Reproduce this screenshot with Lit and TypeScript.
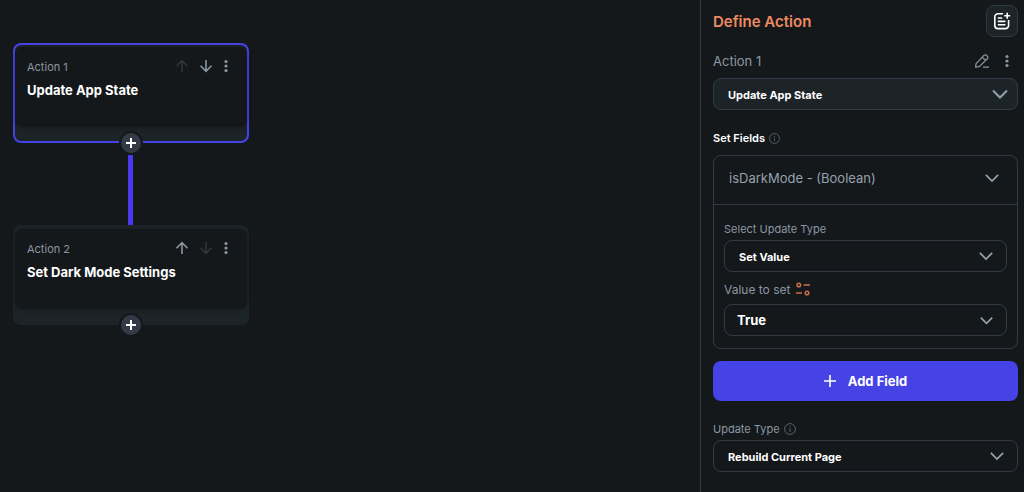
import { LitElement, html, css, svg, nothing } from "lit";
import { customElement, property } from "lit/decorators.js";

const dots = svg`<svg class="icon" width="16" height="16" viewBox="0 0 16 16" fill="currentColor" aria-hidden="true">
  <circle cx="8" cy="3.5" r="1.6"/><circle cx="8" cy="8" r="1.6"/><circle cx="8" cy="12.5" r="1.6"/></svg>`;

const arrow = (up: boolean) => svg`<svg class="icon" width="16" height="16" viewBox="0 0 16 16" fill="none" stroke="currentColor" stroke-width="1.6" aria-hidden="true">
  <path d=${up ? "M8 14V3M2.5 8.2L8 2.7l5.5 5.5" : "M8 2v11M2.5 7.8L8 13.3l5.5-5.5"}/></svg>`;

const info = (size: number) => svg`<svg class="icon info" width=${size} height=${size} viewBox="0 0 12 12" fill="none" stroke="currentColor" aria-hidden="true">
  <circle cx="6" cy="6" r="5.4"/><path d="M6 5.2v3.6M6 3v1.2"/></svg>`;

const chevron = (size: number) => svg`<svg class="icon chevron" width=${size} height=${size} viewBox="0 0 16 16" fill="none" stroke="currentColor" stroke-width="2" aria-hidden="true">
  <path d="M1 4.5l7 7 7-7"/></svg>`;

const reset = css`
  * { box-sizing: border-box; }
  button, select { font: inherit; color: inherit; }
  button { display: grid; place-items: center; padding: 0; border: 0; background: none; cursor: pointer; }
  .icon { display: block; flex: none; }
`;

@customElement("action-node")
export class ActionNode extends LitElement {
  @property() label = "";
  @property() name = "";
  @property({ type: Boolean, reflect: true }) selected = false;
  @property({ type: Boolean }) first = false;
  @property({ type: Boolean }) last = false;

  static styles = [reset, css`
    :host { display: block; position: relative; width: 236px; }
    .frame {
      padding: 2px 0 14px;
      border: 2px solid #1d2428;
      border-radius: 8px;
      background: #1d2428;
    }
    :host([selected]) .frame { border-color: #4542e6; }
    .card {
      height: 80px;
      padding: 10px 12px;
      border-radius: 8px;
      background: #14181b;
      box-shadow: 0 1px 4px rgba(0, 0, 0, 0.3);
    }
    .top { display: flex; align-items: center; height: 18px; color: #8b97a2; }
    .label { flex: 1; padding-top: 2px; font-size: 11px; line-height: 18px; }
    .tools { display: flex; gap: 8px; margin-right: 1px; }
    .tools .more { margin-left: -4px; }
    .tools button:disabled { color: #30363b; cursor: default; }
    .name { margin: 5px 0 0; font-size: 13px; line-height: 20px; font-weight: 700; color: #fff; }
    .add {
      position: absolute;
      left: calc(50% - 12px);
      bottom: -12px;
      width: 24px;
      height: 24px;
      border: 2px solid #14181b;
      border-radius: 50%;
      background: #323b45;
      color: #fff;
    }
  `];

  render() {
    return html`
      <div class="frame">
        <div class="card">
          <div class="top">
            <span class="label">${this.label}</span>
            <div class="tools">
              <button aria-label="Move up" ?disabled=${this.first}>${arrow(true)}</button>
              <button aria-label="Move down" ?disabled=${this.last}>${arrow(false)}</button>
              <button class="more" aria-label="More">${dots}</button>
            </div>
          </div>
          <h2 class="name">${this.name}</h2>
        </div>
      </div>
      <button class="add" aria-label="Add action">
        <svg class="icon" width="10" height="10" viewBox="0 0 10 10" stroke="currentColor" stroke-width="2" aria-hidden="true"><path d="M5 0v10M0 5h10"/></svg>
      </button>`;
  }
}

@customElement("app-root")
export class AppRoot extends LitElement {
  static styles = [reset, css`
    :host {
      display: flex;
      min-height: 100vh;
      background: #14181b;
      color: #95a1ac;
      font-family: "Inter", "Roboto", sans-serif;
      font-size: 12px;
    }
    .canvas { flex: 1; padding: 43px 13px; }
    .link { width: 5px; height: 70px; margin: 12px 0 0 115px; background: #4b39ef; }
    .panel {
      display: flex;
      flex-direction: column;
      width: 324px;
      padding: 5px 6px 20px 12px;
      border-left: 1px solid #323b45;
    }
    .row { display: flex; align-items: center; }
    .title { flex: 1; margin: 0; padding-top: 2px; font-size: 15px; line-height: 20px; font-weight: 600; color: #ee8b60; }
    .notes {
      width: 32px;
      height: 32px;
      border: 1px solid #323b45;
      border-radius: 8px;
      background: #1d2428;
      color: #fff;
    }
    .current { height: 24px; margin: 12px 0 5px; color: #8b97a2; }
    .current .name { flex: 1; font-size: 13px; }
    .current .tools { display: flex; gap: 9px; margin-right: 3px; }
    .select { display: grid; align-items: center; }
    .select > * { grid-area: 1 / 1; }
    .select select {
      width: 100%;
      height: 32px;
      padding: 2px 36px 0 14px;
      border: 1px solid #323b45;
      border-radius: 8px;
      background: #14181b;
      color: #fff;
      font-size: 11px;
      font-weight: 700;
      appearance: none;
    }
    .select.filled select { background: #1d2428; }
    .select.large select { padding: 0 36px 0 12px; font-size: 13px; font-weight: 700; }
    .select .chevron { justify-self: end; margin-right: 14px; color: #95a1ac; pointer-events: none; }
    .select.filled .chevron { margin-right: 10px; }
    .caption { display: flex; align-items: center; gap: 4px; height: 18px; }
    .strong { margin: 19px 0 8px; font-size: 11px; font-weight: 600; color: #fff; }
    .info { color: #57636c; }
    .field { border: 1px solid #323b45; border-radius: 8px; }
    .field-head {
      display: flex;
      justify-content: space-between;
      align-items: center;
      width: 100%;
      height: 49px;
      padding: 0 18px 4px 15px;
      border-bottom: 1px solid #323b45;
      font-size: 13px;
    }
    .field-body { padding: 15px 10px 12px; }
    .field-body .caption { margin-bottom: 2px; font-size: 11px; color: #8b97a2; }
    .field-body .caption.value { gap: 6px; margin: 8px 0 6px; font-size: 12px; }
    .variable { color: #c96f47; }
    .add-field {
      display: flex;
      justify-content: center;
      align-items: center;
      gap: 12px;
      height: 40px;
      margin: 12px 0 19px;
      border-radius: 8px;
      background: #4542e6;
      color: #fff;
      font-size: 13px;
      font-weight: 700;
    }
    .update { margin-bottom: 2px; font-size: 11px; color: #8b97a2; }
  `];

  private select(id: string, value: string, kind = "", size = 14, label = "") {
    return html`<div class="select ${kind}">
      <select id=${id} aria-label=${label || nothing}><option>${value}</option></select>
      ${chevron(size)}
    </div>`;
  }

  render() {
    return html`
      <main class="canvas">
        <action-node label="Action 1" name="Update App State" selected first></action-node>
        <div class="link"></div>
        <action-node label="Action 2" name="Set Dark Mode Settings" last></action-node>
      </main>
      <aside class="panel">
        <header class="row">
          <h1 class="title">Define Action</h1>
          <button class="notes" aria-label="Add note">
            <svg class="icon" width="18" height="18" viewBox="0 0 18 18" fill="none" stroke="currentColor" stroke-width="1.6" aria-hidden="true">
              <path d="M10 1.8H5A3.2 3.2 0 0 0 1.8 5v8.4a3.2 3.2 0 0 0 3.2 3.2h7.4a3.2 3.2 0 0 0 3.2-3.2V8"/>
              <path d="M14.2 0.8v6M11.2 3.8h6M4.8 6h4.4M4.8 9.4h7.6M4.8 12.8h7.6"/>
            </svg>
          </button>
        </header>
        <div class="row current">
          <span class="name">Action 1</span>
          <div class="tools">
            <button aria-label="Rename">
              <svg class="icon" width="16" height="16" viewBox="0 0 16 16" fill="none" stroke="currentColor" stroke-width="1.2" stroke-linejoin="round" aria-hidden="true">
                <path d="M1.6 14.2l.5-3.6 7.8-8.2a1.9 1.9 0 0 1 2.8 0l.6.6a1.9 1.9 0 0 1 0 2.7l-8 8zM8.2 4.2l3.3 3.3M9 14.2h6"/>
              </svg>
            </button>
            <button aria-label="More">${dots}</button>
          </div>
        </div>
        ${this.select("action", "Update App State", "filled", 16, "Action")}
        <div class="caption strong">Set Fields ${info(11)}</div>
        <section class="field">
          <button class="field-head" aria-expanded="true">isDarkMode - (Boolean) ${chevron(14)}</button>
          <div class="field-body">
            <label class="caption" for="update-kind">Select Update Type</label>
            ${this.select("update-kind", "Set Value")}
            <label class="caption value" for="value">Value to set
              <svg class="icon variable" width="14" height="14" viewBox="0 0 14 14" fill="none" stroke="currentColor" stroke-width="1.5" aria-hidden="true">
                <circle cx="2.8" cy="3" r="1.8"/><path d="M7.5 3H14M0 11h6"/><circle cx="11" cy="11" r="1.8"/>
              </svg>
            </label>
            ${this.select("value", "True", "large", 13)}
          </div>
        </section>
        <button class="add-field">
          <svg class="icon" width="12" height="12" viewBox="0 0 12 12" stroke="currentColor" stroke-width="1.6" aria-hidden="true"><path d="M6 0v12M0 6h12"/></svg>
          Add Field
        </button>
        <label class="caption update" for="rebuild">Update Type ${info(12)}</label>
        ${this.select("rebuild", "Rebuild Current Page")}
      </aside>`;
  }
}
